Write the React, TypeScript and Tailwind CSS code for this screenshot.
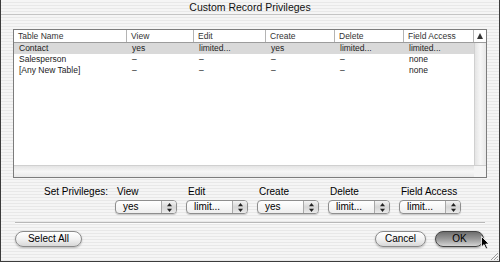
const stripes =
  'bg-[repeating-linear-gradient(180deg,#f5f5f5_0px,#f5f5f5_2px,#e8e8e8_2px,#e8e8e8_3px)]'

const columns = [
  { name: 'Table Name', w: 'w-[113px]' },
  { name: 'View', w: 'w-[67px]' },
  { name: 'Edit', w: 'w-[72px]' },
  { name: 'Create', w: 'w-[69px]' },
  { name: 'Delete', w: 'w-[69px]' },
  { name: 'Field Access', w: 'w-[70px]' },
]

const rows = [
  ['Contact', 'yes', 'limited...', 'yes', 'limited...', 'limited...'],
  ['Salesperson', '–', '–', '–', '–', 'none'],
  ['[Any New Table]', '–', '–', '–', '–', 'none'],
]

const popups = [
  { label: 'View', value: 'yes' },
  { label: 'Edit', value: 'limit...' },
  { label: 'Create', value: 'yes' },
  { label: 'Delete', value: 'limit...' },
  { label: 'Field Access', value: 'limit...' },
]

function UpDown() {
  return (
    <svg width="5" height="9" viewBox="0 0 5 9">
      <path d="M2.5 0 L5 3.2 L0 3.2 Z" fill="#222" />
      <path d="M2.5 9 L5 5.8 L0 5.8 Z" fill="#222" />
    </svg>
  )
}

function Popup({ value }: { value: string }) {
  return (
    <div className="flex h-[14px] w-[62px] overflow-hidden rounded-[4px] border border-[#8e8e8e] bg-gradient-to-b from-white to-[#eeeeee] shadow-[0_1px_1px_rgba(0,0,0,0.18)]">
      <div className="flex-1 pl-[7px] text-[10px] leading-[12px] text-black">{value}</div>
      <div className="flex w-[15px] items-center justify-center border-l border-[#a8a8a8] bg-gradient-to-b from-[#f4f4f4] via-[#d6d6d6] to-[#eaeaea]">
        <UpDown />
      </div>
    </div>
  )
}

function AquaButton({ label, w, primary }: { label: string; w: string; primary?: boolean }) {
  return (
    <button
      type="button"
      className={
        primary
          ? `${w} h-[16px] rounded-full border border-[#444] bg-gradient-to-b from-[#6e6e6e] via-[#9a9a9a] to-[#d4d4d4] text-[10px] leading-[14px] text-black shadow-[0_1px_2px_rgba(0,0,0,0.35)]`
          : `${w} h-[16px] rounded-full border border-[#8a8a8a] bg-gradient-to-b from-white via-[#f2f2f2] to-[#d8d8d8] text-[10px] leading-[14px] text-black shadow-[0_1px_2px_rgba(0,0,0,0.25)]`
      }
    >
      {label}
    </button>
  )
}

export default function App() {
  return (
    <div
      className="relative flex h-[262px] w-[500px] flex-col overflow-hidden border-x border-b border-[#3c3c3c] bg-[#f0f0f0] text-black"
      style={{ fontFamily: '"Liberation Sans", Arial, sans-serif' }}
    >
      {/* title bar */}
      <div className={`flex h-[15px] items-center justify-center border-b border-[#c4c4c4] ${stripes}`}>
        <span className="pt-[1px] text-[10.5px] leading-none text-[#111]">Custom Record Privileges</span>
      </div>

      <div className={`flex flex-1 flex-col ${stripes}`}>
        {/* table */}
        <div className="ml-[12px] mt-[14px] flex h-[149px] w-[474px] flex-col border border-[#7c7c7c] bg-white">
          <div className="flex h-[13px] border-b border-[#9c9c9c] bg-white text-[8.5px] leading-[12px] text-[#333]">
            {columns.map((c) => (
              <div key={c.name} className={`${c.w} border-r border-[#b4b4b4] pl-[4px]`}>
                {c.name}
              </div>
            ))}
            <div className="flex w-[12px] items-center justify-center">
              <svg width="6" height="6" viewBox="0 0 6 6">
                <path d="M3 0 L6 6 L0 6 Z" fill="#333" />
              </svg>
            </div>
          </div>
          <div className="flex flex-1">
            <div className="w-[460px] text-[8.5px] leading-[11px] text-[#222]">
              {rows.map((r, i) => (
                <div key={r[0]} className={`flex h-[11px] ${i === 0 ? 'bg-[#d9d9d9]' : ''}`}>
                  {r.map((cell, j) => (
                    <div key={j} className={`${columns[j].w} pl-[5px]`}>
                      {cell}
                    </div>
                  ))}
                </div>
              ))}
            </div>
            <div className="w-[12px] border-l border-[#d0d0d0] bg-gradient-to-r from-[#e4e4e4] via-[#f6f6f6] to-[#e8e8e8]" />
          </div>
          <div className="flex h-[12px] border-t border-[#d0d0d0]">
            <div className="w-[460px] bg-gradient-to-b from-[#e4e4e4] via-[#f6f6f6] to-[#e8e8e8]" />
            <div className="w-[12px] bg-[#f4f4f4]" />
          </div>
        </div>

        {/* set privileges */}
        <div className="mt-[8px] flex text-[10px] leading-[12px]">
          <div className="w-[114px] pr-[7px] text-right">Set Privileges:</div>
          <div className="flex gap-[9px]">
            {popups.map((p) => (
              <div key={p.label} className="flex w-[62px] flex-col">
                <div className="h-[12px] pl-[2px]">{p.label}</div>
                <div className="mt-[2px]">
                  <Popup value={p.value} />
                </div>
              </div>
            ))}
          </div>
        </div>

        <div className="mx-[14px] mt-[8px] h-[2px] border-t border-[#b8b8b8] bg-white/70" />

        <div className="mt-[7px] flex items-center pl-[14px] pr-[15px]">
          <AquaButton label="Select All" w="w-[67px]" />
          <div className="flex-1" />
          <AquaButton label="Cancel" w="w-[51px]" />
          <div className="w-[9px]" />
          <AquaButton label="OK" w="w-[49px]" primary />
        </div>
      </div>

      {/* mouse pointer over OK */}
      <svg className="absolute left-[480px] top-[236px]" width="9" height="14" viewBox="0 0 9 14">
        <path d="M0.5 0.5 L0.5 11 L3 8.6 L5 13 L6.6 12.3 L4.7 8 L8 8 Z" fill="#000" stroke="#fff" strokeWidth="0.8" />
      </svg>

      {/* resize grip */}
      <svg className="absolute bottom-0 right-0" width="10" height="10" viewBox="0 0 10 10">
        <path d="M9 2 L2 9 M9 5 L5 9 M9 8 L8 9" stroke="#9a9a9a" strokeWidth="1" />
      </svg>
    </div>
  )
}
